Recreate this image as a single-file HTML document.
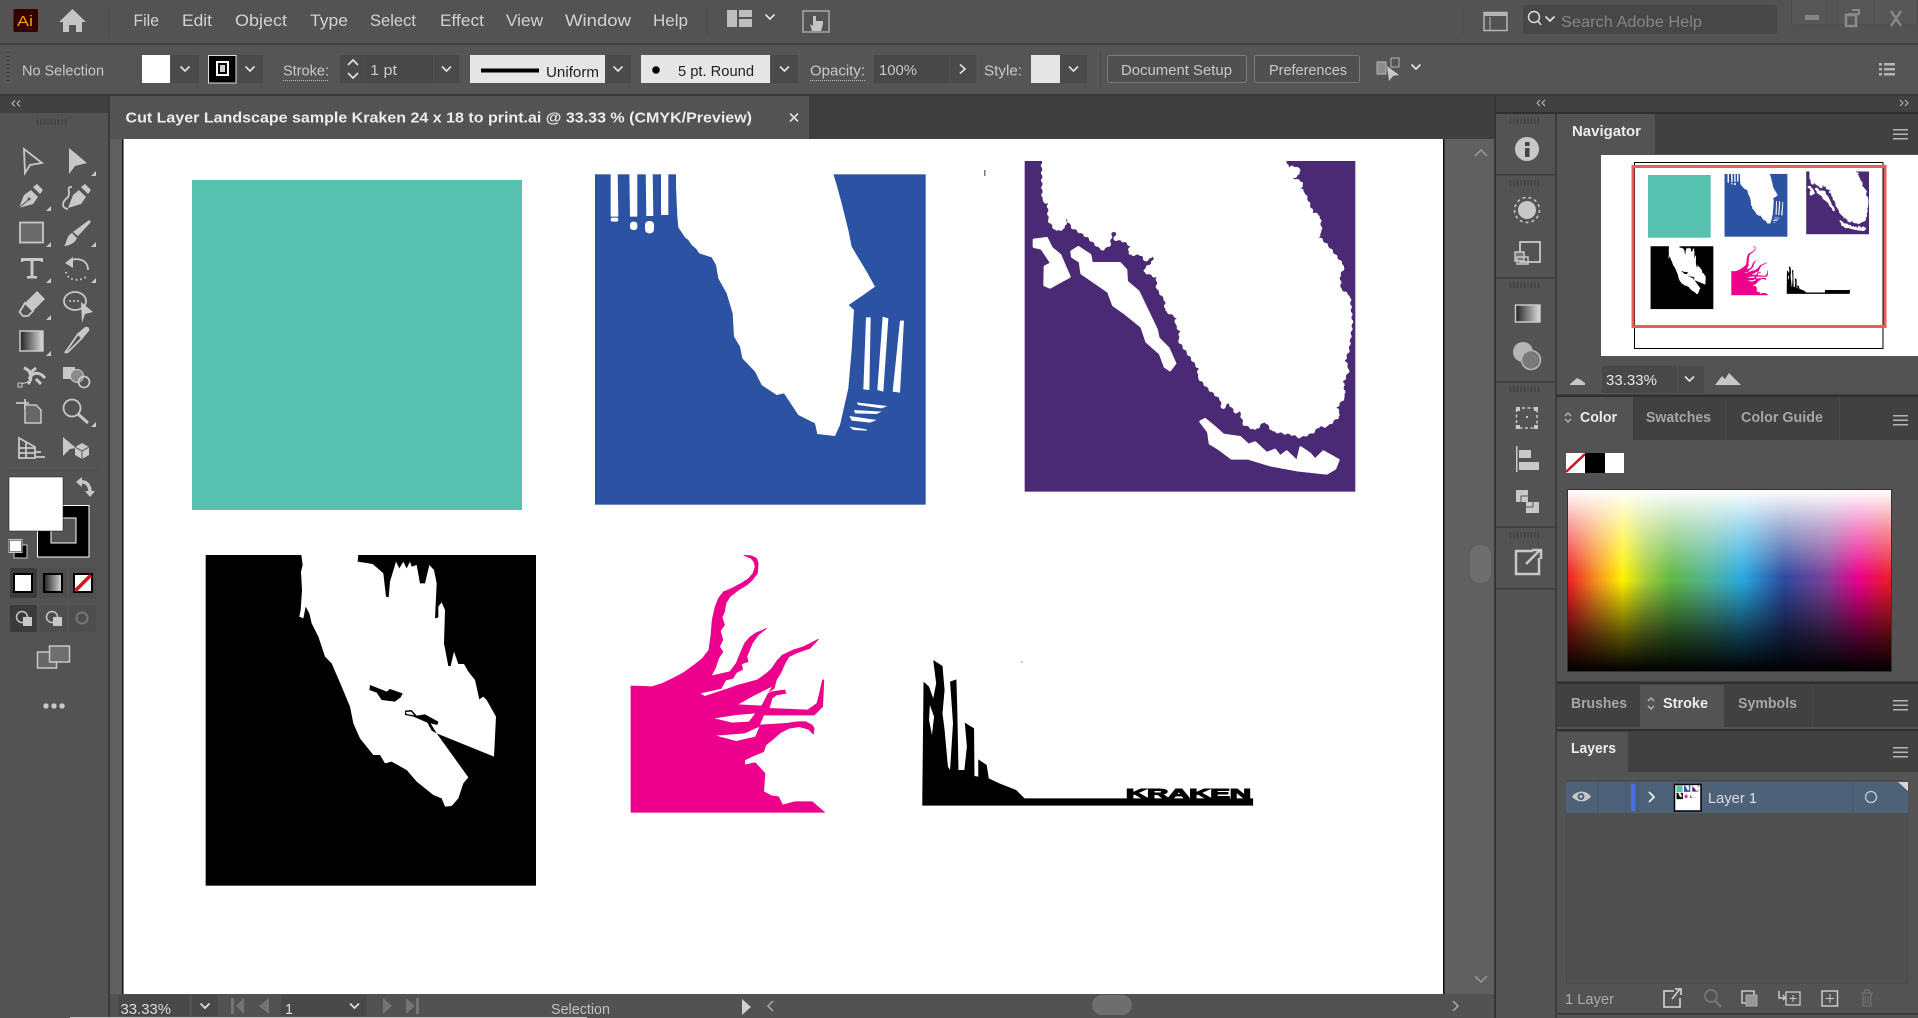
<!DOCTYPE html>
<html><head><meta charset="utf-8"><title>Adobe Illustrator</title>
<style>
html,body{margin:0;padding:0;background:#535353;width:1918px;height:1018px;overflow:hidden}
svg{display:block;position:absolute;left:0;top:0}
text{font-family:"Liberation Sans",sans-serif;white-space:pre}
.m{font-size:16.5px;fill:#d2d2d2}
.c{font-size:14.5px;fill:#c9c9c9}
.d{font-size:14.5px;fill:#222}
.b{font-size:14.5px;font-weight:bold;fill:#ececec}
.i{font-size:14.5px;font-weight:bold;fill:#a6a6a6}
.ic{fill:#c8c8c8}
.st{fill:none;stroke:#c8c8c8;stroke-width:1.8}
.ch{fill:none;stroke:#e0e0e0;stroke-width:1.7}
</style></head><body>
<svg width="1918" height="1018" viewBox="0 0 1918 1018" xmlns="http://www.w3.org/2000/svg">
<defs>
<path id="chev" class="ch" d="M-4.5 -2.5L0 2L4.500 -2.500"/>
<g id="mn"><rect x="0" y="0" width="15" height="1.5" fill="#b5b5b5"/><rect x="0" y="4.500" width="15" height="1.500" fill="#b5b5b5"/><rect x="0" y="9" width="15" height="1.500" fill="#b5b5b5"/></g>
<line id="grip" x1="0" x2="29" y1="0" y2="0" stroke="#333" stroke-width="6" stroke-dasharray="1 2.500" opacity=".75"/>
<path id="tri" d="M-5 0H0V-5Z" fill="#c8c8c8"/>
<linearGradient id="gr" x1="0" x2="1"><stop offset="0" stop-color="#222"/><stop offset="1" stop-color="#ddd"/></linearGradient>
<linearGradient id="hue" x1="0" x2="1">
<stop offset="0" stop-color="#ed1c24"/><stop offset=".09" stop-color="#f7941d"/><stop offset=".17" stop-color="#fff200"/><stop offset=".24" stop-color="#a6ce39"/><stop offset=".32" stop-color="#5fb946"/><stop offset=".44" stop-color="#4fb39a"/><stop offset=".54" stop-color="#27aae1"/><stop offset=".67" stop-color="#2e4a9e"/><stop offset=".8" stop-color="#7f3f98"/><stop offset=".9" stop-color="#ec008c"/><stop offset="1" stop-color="#ed1c24"/></linearGradient>
<linearGradient id="wh" x1="0" x2="0" y1="0" y2="1"><stop offset="0" stop-color="#fff"/><stop offset=".2" stop-color="#fff" stop-opacity=".55"/><stop offset=".48" stop-color="#fff" stop-opacity="0"/></linearGradient>
<linearGradient id="bk" x1="0" x2="0" y1="0" y2="1"><stop offset=".5" stop-color="#000" stop-opacity="0"/><stop offset=".8" stop-color="#000" stop-opacity=".65"/><stop offset="1" stop-color="#000"/></linearGradient>
<polygon id="pm" points="100,25 102,150 118,158 120,210 140,238 160,232 168,195 190,230 235,258 275,295 295,285 302,240 325,245 318,265 345,270 365,285 360,310 395,310 410,330 425,310 438,320 430,340 405,362 445,380 445,415 470,450 470,480 505,500 500,520 515,545 510,570 570,655 568,680 600,715 635,745 640,770 655,750 680,785 692,775 705,820 735,835 765,805 790,840 850,850 870,858 905,845 925,825 950,825 985,795 975,770 1000,740 995,695 1012,660 1000,630 1012,600 1022,520 1015,440 988,420 985,375 998,350 950,290 920,260 930,245 925,200 905,190 880,130 865,115 875,100 838,85 865,70 862,55 830,55 823,25"/>
<g id="art">
<rect x="192" y="180" width="330" height="330" fill="#56c1ae"/>
<g transform="translate(580,150) scale(.33333)">
<rect x="45" y="73" width="992" height="991" fill="#2b52a3"/>
<g fill="#fff">
<polygon points="288,65 288,110 292,200 295,232 315,262 325,270 335,285 348,296 358,310 395,322 408,345 415,385 440,430 458,490 462,560 480,590 487,625 525,665 545,705 590,735 612,730 655,795 705,820 712,852 765,858 780,825 805,715 815,600 822,480 806,465 850,435 885,410 860,365 815,290 805,240 785,160 770,105 758,65"/>
<polygon points="92,65 113,65 115,200 92,200"/><rect x="92" y="203" width="23" height="12" rx="6"/>
<polygon points="148,65 172,65 172,200 150,200"/><rect x="150" y="215" width="22" height="25" rx="9"/>
<polygon points="197,65 218,65 220,198 199,198"/><rect x="195" y="213" width="27" height="37" rx="12"/>
<polygon points="243,65 265,65 265,195 243,195"/>
<polygon points="858,502 872,502 868,720 850,718"/><polygon points="908,500 925,505 910,725 892,720"/><polygon points="960,512 972,512 960,728 938,725"/>
<polygon points="830,757 922,768 905,775 835,765"/><polygon points="822,780 905,785 890,792 825,790"/><polygon points="808,798 890,810 870,818 815,812"/><polygon points="808,830 860,838 860,842 820,840"/>
</g></g>
<g transform="translate(1010,150) scale(.33333)">
<rect x="44" y="33" width="992" height="992" fill="#4b2a75"/>
<g fill="#fff" stroke="#fff" stroke-width="8" stroke-linejoin="round">
<use href="#pm"/>
<polygon points="72,270 110,265 125,295 150,315 178,380 150,395 120,412 104,405 105,350 125,340 95,295 72,290"/>
<polygon points="185,305 205,292 240,315 245,340 330,340 348,360 350,395 385,425 440,540 445,565 475,595 495,640 480,660 465,650 450,610 410,575 395,530 345,490 310,465 295,425 215,370 210,335 187,320"/>
<polygon points="572,815 585,808 612,830 640,855 690,862 715,885 735,878 770,910 795,900 810,920 830,905 862,935 872,893 900,912 915,930 940,905 985,930 975,955 950,970 860,960 780,945 715,925 665,925 625,895 600,880 595,845"/>
</g>
<use href="#pm" fill="none" stroke="#fff" stroke-width="16" stroke-linecap="round" stroke-dasharray="0 22"/>
<rect x="40" y="20" width="1000" height="13" fill="#fff"/>
</g>
<g transform="translate(190,540) scale(.33333)">
<rect x="47" y="45" width="991" height="992" fill="#000"/>
<polygon fill="#fff" points="333,38 338,75 333,95 336,150 332,210 328,230 340,235 347,200 358,220 365,250 385,290 405,350 425,370 455,440 480,500 490,550 510,595 550,645 570,645 585,670 605,665 650,690 680,725 730,765 755,775 765,800 785,798 805,775 820,730 835,712 740,580 912,650 918,530 890,480 880,470 868,478 855,420 835,395 822,372 805,372 792,335 782,378 775,378 762,310 765,210 755,187 745,200 745,232 735,235 740,130 732,90 718,75 705,130 690,130 680,75 665,80 660,65 650,85 640,65 628,85 618,65 600,125 596,172 588,170 580,100 548,72 503,65 505,38"/>
<polygon fill="#000" points="540,435 590,455 600,447 638,460 632,472 615,485 575,480 560,458 538,450"/>
<polygon fill="#000" points="645,512 665,510 680,527 705,523 745,545 742,555 722,550 740,580 725,572 712,548 670,530 645,525"/>
<polygon fill="#fff" points="648,516 664,515 672,526 650,522"/>
</g>
<g transform="translate(610,540) scale(.42087,.33333)">
<polygon fill="#ec008c" stroke="#ec008c" stroke-width="2" stroke-linejoin="round" points="50,438 100,440 125,430 150,415 175,398 200,375 220,355 235,330 240,285 243,240 250,200 258,175 270,155 290,145 312,130 330,115 340,100 345,80 342,65 335,55 318,46 335,47 348,55 352,70 350,100 338,120 325,135 305,150 285,170 275,190 272,215 266,232 272,255 262,272 268,300 260,320 268,335 258,355 250,385 240,408 285,395 300,370 308,345 320,310 332,292 345,280 372,265 352,285 338,310 325,350 328,365 312,372 315,388 300,398 292,415 275,420 262,450 350,420 372,400 385,385 397,362 410,345 435,330 460,320 495,298 475,325 445,338 425,350 415,372 405,400 395,420 390,445 360,470 385,455 415,450 418,460 395,465 385,475 378,505 470,510 492,490 498,460 505,420 508,420 505,500 485,525 420,525 365,525 355,555 420,550 445,545 465,545 480,555 485,565 483,582 472,568 450,560 425,565 405,578 385,600 370,615 365,635 340,648 320,660 320,675 345,668 368,700 365,755 385,768 400,770 410,795 440,785 480,785 510,817 50,817"/>
<g fill="#fff">
<polygon points="215,460 262,447 300,437 225,468"/>
<polygon points="305,493 345,465 385,440 375,460 360,497"/>
<polygon points="248,535 300,525 345,520 330,545 290,548"/>
<polygon points="252,587 320,580 355,560 345,590 300,603"/>
</g></g>
<g transform="translate(610,540) scale(.42087,.33333)">
<polygon fill="#000" points="742,797 742,775 745,425 758,440 768,475 775,430 768,360 790,378 795,450 790,520 795,570 800,640 803,680 808,690 810,650 815,550 808,425 823,418 825,500 828,690 842,690 848,620 843,548 865,565 866,708 875,710 875,658 895,675 900,715 925,730 965,750 985,775 1528,775 1528,797"/>
<polygon fill="#fff" points="760,495 770,530 765,585 758,540"/>
</g>
</g>
</defs>

<!-- base -->
<rect width="1918" height="1018" fill="#535353"/>
<rect y="0" width="1918" height="43" fill="#535353"/>
<rect y="43" width="1918" height="2" fill="#404040"/>
<rect y="45" width="1918" height="49" fill="#555"/>
<rect y="94" width="1918" height="2" fill="#383838"/>

<!-- canvas area -->
<rect x="110" y="96" width="1386" height="922" fill="#606060"/>
<rect x="110" y="96" width="1386" height="43" fill="#3f3f3f"/>
<rect x="110" y="96" width="699" height="43" fill="#535353"/>
<rect x="122" y="139" width="1322" height="855" fill="#fff"/>
<rect x="122" y="139" width="1.500" height="855" fill="#111"/>
<rect x="1443" y="139" width="1.500" height="855" fill="#111"/>
<use href="#art"/>
<text x="1126" y="798" font-size="12.500" font-weight="bold" fill="#000" stroke="#000" stroke-width="1" textLength="125" lengthAdjust="spacingAndGlyphs">KRAKEN</text>
<rect x="984" y="170" width="1.500" height="6" fill="#777"/>
<rect x="1021" y="661" width="1.500" height="2" fill="#bbb"/>

<!-- left toolbar -->
<rect x="0" y="96" width="108" height="922" fill="#535353"/>
<rect x="108" y="96" width="2" height="922" fill="#3a3a3a"/>
<rect x="0" y="96" width="108" height="17" fill="#414141"/>
<path d="M15 100.500L12 103.500L15 106.500M20 100.500L17 103.500L20 106.500" fill="none" stroke="#bbb" stroke-width="1"/>
<use href="#grip" x="37" y="122"/>
<path d="M24 149L42 163L30 165L25 173Z" class="st"/>
<path d="M69 148L87 163L75 166L69 174Z" class="ic"/><use href="#tri" x="96" y="176"/>
<!-- pen -->
<path d="M19 208L24 195L31 190L38 197L33 204Z" class="ic"/><path d="M33 187L37 184L43 190L40 194Z" class="ic"/><circle cx="29" cy="199" r="1.500" fill="#535353"/><path d="M19 208L28 200" stroke="#535353" fill="none"/><use href="#tri" x="51" y="211"/>
<path d="M68 208L73 195L79 190L86 197L81 204Z" class="ic"/><path d="M81 187L85 184L91 190L88 194Z" class="ic"/><path d="M72 187C65 186 72 194 67 198C62 202 61 208 68 209" class="st"/>
<!-- rect, brush -->
<rect x="20" y="222.500" width="23" height="20" fill="#6a6a6a" stroke="#c8c8c8" stroke-width="1.800"/><use href="#tri" x="51" y="247"/>
<path d="M89 220L91 222L78 236L73 232Z" class="ic"/><path d="M72 233L77 238C75 243 69 246 64 246C67 243 66 236 72 233Z" class="ic"/><use href="#tri" x="96" y="247"/>
<!-- type, rotate -->
<path d="M21 258H43V262H41.500L40 261H33.500V276H37V278.500H27V276H30.500V261H24L22.500 262H21Z" class="ic"/><use href="#tri" x="51" y="283"/>
<path d="M68 262C74 257 88 258 88 270" class="st"/><path d="M65 263L73 257V268Z" class="ic"/><path d="M66 272C67 280 78 282 86 277" fill="none" stroke="#c8c8c8" stroke-width="2" stroke-dasharray="1.500 3"/><use href="#tri" x="96" y="283"/>
<!-- eraser, shaper -->
<path d="M37 291L45 299L33 311L25 303Z" class="ic"/><path d="M25 303L33 311L28 316H23L19.500 312Z" class="st"/><use href="#tri" x="51" y="320"/>
<ellipse cx="75" cy="301" rx="11" ry="9" class="st"/><circle cx="70" cy="301" r="1" class="ic"/><circle cx="74" cy="301" r="1" class="ic"/><circle cx="78" cy="301" r="1" class="ic"/><path d="M81 302L93 312L85 314L82 323Z" class="ic"/>
<!-- gradient, eyedropper -->
<rect x="20" y="331" width="23" height="20" fill="url(#gr)" stroke="#c8c8c8" stroke-width="1.500"/><use href="#tri" x="51" y="356"/>
<path d="M67 350C64 353 65 353 68 352L82 338L78 334Z" class="st" /><path d="M78 333L85 327C88 326 90 328 89 331L83 338Z" class="ic"/>
<!-- puppet, shape builder -->
<path d="M24 368C31 370 33 378 28 384M29 379C33 371 40 372 45 378M30 373L36 368M36 379L41 384" fill="none" stroke="#c8c8c8" stroke-width="3"/><rect x="18" y="383" width="4" height="4" fill="none" stroke="#c8c8c8"/><path d="M21 384L28 382" stroke="#c8c8c8"/>
<rect x="63" y="367" width="12" height="12" class="ic"/><circle cx="77" cy="376" r="6.500" fill="#8a8a8a" stroke="#c8c8c8"/><circle cx="84" cy="382" r="5.500" class="st"/>
<!-- artboard, zoom -->
<path d="M16 403H29M25 399V409" class="st"/><path d="M25 405H36L41 410V423H25Z" fill="#666" stroke="#c8c8c8" stroke-width="1.500"/>
<circle cx="72" cy="408" r="8.500" fill="none" stroke="#c8c8c8" stroke-width="1.800"/><path d="M78 414L88 423" stroke="#c8c8c8" stroke-width="3"/><use href="#tri" x="96" y="427"/>
<!-- perspective, 3d -->
<path d="M19 438L35 447V458H19ZM19 448H35M26 441V458M19 453H35" class="st" stroke-width="1.300"/><path d="M34 452H41M36 457H45" class="st" stroke-width="1.300"/>
<path d="M63 437L76 448L70 449L63 456Z" class="ic"/><path d="M82 443L89 447V455L82 459L75 455V447Z" class="ic"/><path d="M75 447L82 451L89 447M82 451V459" stroke="#535353" fill="none"/>
<rect x="8" y="470" width="90" height="1" fill="#4b4b4b"/>

<!-- fill/stroke -->
<rect x="37.500" y="505.500" width="51.500" height="51.500" fill="#000" stroke="#fff"/>
<rect x="51" y="518" width="25" height="25" fill="#535353" stroke="#fff"/>
<rect x="9" y="477" width="54" height="54" fill="#fff" stroke="#111" stroke-width=".5"/>
<path d="M80 482C87 481 90 486 90 492" fill="none" stroke="#c8c8c8" stroke-width="3.500"/><path d="M82 477V487L76 482ZM85 491H95L90 497Z" class="ic"/>
<rect x="14" y="545" width="13" height="13" fill="#000" stroke="#c8c8c8"/><rect x="9.500" y="540" width="12" height="12" fill="#fff" stroke="#111"/><rect x="9" y="539.500" width="13" height="13" fill="none" stroke="#c8c8c8"/>
<rect x="10" y="568" width="27" height="30" rx="2" fill="#3b3b3b"/><rect x="39" y="568" width="28" height="30" fill="#4e4e4e"/><rect x="69" y="568" width="27" height="30" fill="#4e4e4e"/>
<rect x="14" y="574" width="18" height="18" fill="#fff" stroke="#000" stroke-width="2"/>
<rect x="44" y="574" width="18" height="18" fill="url(#gr)" stroke="#000" stroke-width="2"/>
<rect x="74" y="574" width="18" height="18" fill="#fff" stroke="#000" stroke-width="2"/><path d="M75 591L91 575" stroke="#d8141e" stroke-width="3.500"/>
<rect x="10" y="605" width="27" height="27" rx="2" fill="#3b3b3b"/><rect x="39" y="605" width="28" height="27" fill="#4e4e4e"/><rect x="69" y="605" width="27" height="27" fill="#4e4e4e"/>
<circle cx="22" cy="617" r="5.500" fill="none" stroke="#c8c8c8" stroke-width="1.500"/><rect x="23" y="617" width="9" height="9" class="ic"/>
<circle cx="52" cy="617" r="5.500" fill="none" stroke="#c8c8c8" stroke-width="1.500"/><rect x="53" y="617" width="9" height="9" class="ic"/>
<circle cx="82" cy="618" r="5.500" fill="none" stroke="#747474" stroke-width="2"/>
<rect x="37.500" y="652" width="19" height="16" fill="#666" stroke="#c8c8c8" stroke-width="1.500"/><rect x="49.500" y="646" width="20" height="16" fill="#6f6f6f" stroke="#c8c8c8" stroke-width="1.500"/>
<circle cx="46" cy="706" r="2.700" class="ic"/><circle cx="54" cy="706" r="2.700" class="ic"/><circle cx="62" cy="706" r="2.700" class="ic"/>

<!-- title bar -->
<rect x="13.500" y="9" width="24.500" height="23" rx="2" fill="#330000"/>
<text x="17" y="26" font-size="15" fill="#ff9a00" textLength="16" lengthAdjust="spacingAndGlyphs">Ai</text>
<path d="M72.500 9L86 22H82V32H76V25H69V32H63V22H59Z" fill="#c4c4c4"/>
<rect x="108.500" y="7" width="1" height="28" fill="#4a4a4a"/>
<text class="m" x="133.500" y="26" textLength="25.500" lengthAdjust="spacingAndGlyphs">File</text>
<text class="m" x="182" y="26" textLength="30" lengthAdjust="spacingAndGlyphs">Edit</text>
<text class="m" x="235" y="26" textLength="52" lengthAdjust="spacingAndGlyphs">Object</text>
<text class="m" x="310" y="26" textLength="38" lengthAdjust="spacingAndGlyphs">Type</text>
<text class="m" x="370" y="26" textLength="46" lengthAdjust="spacingAndGlyphs">Select</text>
<text class="m" x="440" y="26" textLength="44" lengthAdjust="spacingAndGlyphs">Effect</text>
<text class="m" x="506" y="26" textLength="37" lengthAdjust="spacingAndGlyphs">View</text>
<text class="m" x="565" y="26" textLength="66" lengthAdjust="spacingAndGlyphs">Window</text>
<text class="m" x="653" y="26" textLength="35" lengthAdjust="spacingAndGlyphs">Help</text>
<rect x="707" y="7" width="1" height="28" fill="#4a4a4a"/>
<path d="M727 10H737V27H727ZM739 10H752V17H739ZM739 19H752V27H739Z" fill="#bdbdbd"/>
<use href="#chev" x="770" y="17"/>
<rect x="803" y="11" width="26" height="21" fill="none" stroke="#a8a8a8" stroke-width="1.500"/>
<path d="M813 16V26L810 24L812 31H821L823 24V21H816V16Z" fill="#c4c4c4"/>
<rect x="1462" y="7" width="1" height="28" fill="#4a4a4a"/>
<rect x="1484" y="12.500" width="23" height="18" fill="none" stroke="#b5b5b5" stroke-width="1.500"/><rect x="1484" y="13" width="23" height="3" fill="#b5b5b5"/><path d="M1490 17V30" stroke="#b5b5b5"/>
<rect x="1523" y="5" width="254.500" height="29" rx="3" fill="#474747"/>
<circle cx="1534" cy="17" r="5.500" fill="none" stroke="#ddd" stroke-width="1.500"/><path d="M1538 21L1541 25" stroke="#ddd" stroke-width="1.500"/>
<use href="#chev" x="1550" y="19"/>
<text x="1561" y="27" font-size="15.500" fill="#848484" textLength="141" lengthAdjust="spacingAndGlyphs">Search Adobe Help</text>
<rect x="1791.500" y="-2" width="126" height="27" rx="2" fill="#575757" stroke="#4c4c4c"/>
<path d="M1832 0V24M1874 0V24" stroke="#4c4c4c"/>
<rect x="1805" y="15" width="14" height="5" fill="#868686"/>
<path d="M1848 14H1859V10H1852" fill="none" stroke="#8a8a8a" stroke-width="2"/><rect x="1846" y="15" width="10" height="11" fill="none" stroke="#8a8a8a" stroke-width="2.500"/>
<path d="M1891 11L1901 26M1901 11L1891 26" stroke="#8a8a8a" stroke-width="2.200"/>

<!-- control bar -->
<path d="M8 52V84" stroke="#3a3a3a" stroke-width="3" stroke-dasharray="1 3"/>
<text class="c" x="22" y="75.500" fill="#b8b8b8" textLength="82" lengthAdjust="spacingAndGlyphs">No Selection</text>
<rect x="142" y="55" width="28" height="28" fill="#fff"/><rect x="171" y="55" width="28" height="28" fill="#4a4a4a"/><use href="#chev" x="185" y="69"/>
<rect x="208.500" y="55.500" width="27.500" height="27.500" fill="#000" stroke="#ddd"/><rect x="217" y="62" width="11" height="13" fill="none" stroke="#fff" stroke-width="2"/><rect x="220" y="65" width="5" height="7" fill="#ccc"/>
<rect x="237" y="55" width="26" height="28" fill="#4a4a4a"/><use href="#chev" x="250" y="69"/>
<text class="c" x="283" y="75.500" textLength="46" lengthAdjust="spacingAndGlyphs">Stroke:</text><path d="M283 80.500H329" stroke="#bbb" stroke-dasharray="1 1"/>
<rect x="340" y="55" width="27" height="28" fill="#4a4a4a"/><path d="M348 65L353 60L358 65M348 73L353 78L358 73" class="ch"/>
<rect x="367" y="55" width="66" height="28" fill="#484848"/><text class="c" x="370" y="75" fill="#ddd" textLength="27" lengthAdjust="spacingAndGlyphs">1 pt</text>
<rect x="433.500" y="55" width="26" height="28" fill="#4a4a4a"/><use href="#chev" x="446.500" y="69"/>
<rect x="470" y="55" width="135" height="28" fill="#e6e6e6"/><rect x="481" y="68.500" width="58" height="4" fill="#000"/><text class="d" x="546" y="77" textLength="53" lengthAdjust="spacingAndGlyphs">Uniform</text>
<rect x="605" y="55" width="26" height="28" fill="#4a4a4a"/><use href="#chev" x="618" y="69"/>
<rect x="641" y="55" width="129" height="28" fill="#e6e6e6"/><circle cx="656" cy="70" r="3.800" fill="#000"/><text class="d" x="678" y="76" textLength="76" lengthAdjust="spacingAndGlyphs">5 pt. Round</text>
<rect x="771" y="55" width="27" height="28" fill="#4a4a4a"/><use href="#chev" x="784.500" y="69"/>
<text class="c" x="810" y="75.500" textLength="55" lengthAdjust="spacingAndGlyphs">Opacity:</text><path d="M810 80.500H865" stroke="#bbb" stroke-dasharray="1 1"/>
<rect x="874" y="55" width="75" height="28" fill="#484848"/><text class="c" x="879" y="75" fill="#ddd" textLength="38" lengthAdjust="spacingAndGlyphs">100%</text>
<rect x="949.500" y="55" width="27" height="28" fill="#4a4a4a"/><path d="M960 64.500L965 69L960 73.500" class="ch"/>
<text class="c" x="984" y="75.500" fill="#aaa" textLength="38" lengthAdjust="spacingAndGlyphs">Style:</text>
<rect x="1031" y="55" width="29" height="28" fill="#e6e6e6"/><rect x="1060" y="55" width="27" height="28" fill="#4a4a4a"/><use href="#chev" x="1073.500" y="69"/>
<rect x="1100" y="50" width="1" height="38" fill="#4b4b4b"/>
<rect x="1107.500" y="55.500" width="139" height="27" rx="2" fill="#505050" stroke="#7a7a7a"/><text class="c" x="1121" y="75" fill="#eaeaea" textLength="111" lengthAdjust="spacingAndGlyphs">Document Setup</text>
<rect x="1254.500" y="55.500" width="105" height="27" rx="2" fill="#505050" stroke="#7a7a7a"/><text class="c" x="1269" y="75" fill="#eaeaea" textLength="78" lengthAdjust="spacingAndGlyphs">Preferences</text>
<rect x="1377" y="62" width="9" height="12" fill="#8a8a8a" stroke="#b5b5b5"/><rect x="1391" y="58" width="8" height="9" fill="none" stroke="#b5b5b5"/><path d="M1387 66L1399 75L1393 76L1389 81Z" class="ic"/>
<use href="#chev" x="1416" y="67"/>
<g fill="#b5b5b5"><rect x="1879" y="63" width="3" height="2.500"/><rect x="1884" y="63" width="11" height="2.500"/><rect x="1879" y="68" width="3" height="2.500"/><rect x="1884" y="68" width="11" height="2.500"/><rect x="1879" y="73" width="3" height="2.500"/><rect x="1884" y="73" width="11" height="2.500"/></g>

<!-- doc tab -->
<text x="125.500" y="122.500" font-size="15" font-weight="bold" fill="#ececec" textLength="626.500" lengthAdjust="spacingAndGlyphs">Cut Layer Landscape sample Kraken 24 x 18 to print.ai @ 33.33 % (CMYK/Preview)</text>
<path d="M790 113.500L798 121.500M798 113.500L790 121.500" stroke="#ddd" stroke-width="1.600"/>

<!-- scrollbar -->
<path d="M1475 156L1481 150L1487 156" fill="none" stroke="#999" stroke-width="1.500"/>
<path d="M1475 976L1481 982L1487 976" fill="none" stroke="#999" stroke-width="1.500"/>
<rect x="1470" y="545" width="21" height="38" rx="10" fill="#6e6e6e"/>

<!-- status bar -->
<rect x="110" y="994" width="1386" height="24" fill="#525252"/>
<rect x="118" y="995" width="71" height="21" fill="#484848"/><text x="120.500" y="1014" font-size="14.500" fill="#ddd" textLength="50.500" lengthAdjust="spacingAndGlyphs">33.33%</text>
<rect x="192" y="995" width="26" height="21" fill="#484848"/><use href="#chev" x="205" y="1006"/>
<path d="M231 998H234V1014H231ZM244 998V1014L236 1006Z" fill="#747474"/><path d="M269 998V1014L259 1006Z" fill="#747474"/>
<rect x="281" y="995" width="61" height="21" fill="#484848"/><text x="285" y="1014" font-size="14.500" fill="#ddd">1</text>
<rect x="342" y="995" width="25" height="21" fill="#484848"/><use href="#chev" x="354.500" y="1006"/>
<path d="M383 998V1014L392 1006Z" fill="#747474"/><path d="M406 998V1014L415 1006ZM416 998H419V1014H416Z" fill="#747474"/>
<text x="551" y="1014" font-size="14.500" fill="#c0c0c0" textLength="59" lengthAdjust="spacingAndGlyphs">Selection</text>
<path d="M742 999V1015L751 1007Z" fill="#d0d0d0"/>
<path d="M773 1001L768 1006L773 1011" fill="none" stroke="#aaa" stroke-width="1.500"/>
<rect x="1092" y="995" width="40" height="20" rx="10" fill="#6e6e6e"/>
<path d="M1453 1001L1458 1006L1453 1011" fill="none" stroke="#aaa" stroke-width="1.500"/>
<rect x="70" y="1017" width="517" height="1" fill="#ccc"/>

<!-- right dock -->
<rect x="1495" y="96" width="423" height="922" fill="#535353"/>
<rect x="1494" y="96" width="2" height="922" fill="#353535"/>
<rect x="1496" y="96" width="422" height="16" fill="#414141"/>
<rect x="1496" y="112" width="422" height="2" fill="#2f2f2f"/>
<path d="M1540 100L1537 103L1540 106M1545 100L1542 103L1545 106" fill="none" stroke="#bbb" stroke-width="1"/>
<path d="M1900 100L1903 103L1900 106M1905 100L1908 103L1905 106" fill="none" stroke="#bbb" stroke-width="1"/>
<rect x="1555" y="114" width="2" height="904" fill="#3d3d3d"/>
<!-- strip -->
<g fill="#3e3e3e"><rect x="1496" y="174" width="59" height="1.500"/><rect x="1496" y="277" width="59" height="1.500"/><rect x="1496" y="381" width="59" height="1.500"/><rect x="1496" y="526.500" width="59" height="1.500"/><rect x="1496" y="588" width="59" height="1.500"/></g>
<use href="#grip" x="1510" y="121"/><use href="#grip" x="1510" y="183"/><use href="#grip" x="1510" y="285"/><use href="#grip" x="1510" y="389"/><use href="#grip" x="1510" y="535"/>
<circle cx="1527" cy="149" r="12" class="ic"/><rect x="1525" y="148" width="4.500" height="9" fill="#444"/><rect x="1525" y="142" width="4.500" height="4" fill="#444"/>
<circle cx="1527" cy="210" r="9" class="ic"/><circle cx="1527" cy="210" r="12.500" fill="none" stroke="#c8c8c8" stroke-width="1.500" stroke-dasharray="3 3"/>
<rect x="1520" y="242" width="20" height="20" class="st"/><rect x="1515" y="252" width="9" height="9" fill="#777" stroke="#c8c8c8" stroke-width="1.500"/><rect x="1517" y="257" width="11" height="7" fill="none" stroke="#c8c8c8" stroke-width="1.500"/>
<rect x="1515.500" y="305" width="24.500" height="17" fill="url(#gr)" stroke="#c8c8c8" stroke-width="1.500"/>
<circle cx="1523" cy="352" r="10" fill="#b5b5b5"/><circle cx="1531" cy="360" r="9.500" fill="#7a7a7a" stroke="#b5b5b5" stroke-width="1.500"/>
<path d="M1516.500 408H1537V428H1516.500Z" fill="none" stroke="#c8c8c8" stroke-width="1.500" stroke-dasharray="3 2.500"/>
<g class="ic"><rect x="1516" y="407" width="4" height="4"/><rect x="1534" y="407" width="4" height="4"/><rect x="1516" y="425" width="4" height="4"/><rect x="1534" y="425" width="4" height="4"/><rect x="1526" y="416" width="2" height="2"/></g>
<rect x="1516" y="446" width="1.500" height="26" class="ic"/><rect x="1519" y="450" width="12" height="8" class="ic"/><rect x="1519" y="462" width="20" height="8" class="ic"/>
<rect x="1516" y="490" width="12" height="12" class="ic"/><rect x="1526" y="502" width="13" height="11" class="ic"/><rect x="1521" y="496" width="12" height="11" fill="none" stroke="#555"/>
<path d="M1533 551H1516V574H1539V558M1526 564L1540 550M1532 550H1541V559" fill="none" stroke="#c8c8c8" stroke-width="2.500"/>

<!-- navigator -->
<rect x="1557" y="114" width="361" height="40" fill="#414141"/>
<rect x="1557" y="114" width="98" height="40" fill="#535353"/>
<text class="b" x="1572" y="136" textLength="69" lengthAdjust="spacingAndGlyphs">Navigator</text>
<use href="#mn" x="1893" y="129"/>
<rect x="1601" y="155" width="317" height="201" fill="#fff"/>
<rect x="1634.500" y="162.500" width="248.500" height="186" fill="#fff" stroke="#000"/>
<g transform="translate(1611.500,140.800) scale(.19)"><use href="#art"/></g>
<rect x="1825" y="290" width="25" height="2.500" fill="#000"/>
<rect x="1633" y="166.500" width="252" height="160" fill="none" stroke="#ec5b5b" stroke-width="3"/>
<path d="M1570 384L1577 378L1581 380L1585 383V385H1570Z" class="ic"/>
<rect x="1602" y="366" width="75" height="27" rx="2" fill="#484848"/><text x="1606" y="385" font-size="15" fill="#e6e6e6" textLength="51" lengthAdjust="spacingAndGlyphs">33.33%</text>
<rect x="1678" y="366" width="26" height="27" fill="#4a4a4a"/><use href="#chev" x="1689.500" y="379"/>
<path d="M1715 385L1722 376L1725 379L1729 373L1741 385Z" class="ic"/>
<rect x="1557" y="394.500" width="361" height="2.500" fill="#2f2f2f"/>

<!-- color -->
<rect x="1557" y="397" width="361" height="43" fill="#414141"/>
<rect x="1557" y="397" width="76" height="43" fill="#535353"/>
<path d="M1565 416L1568 413L1571 416M1565 419L1568 422L1571 419" fill="none" stroke="#bbb" stroke-width="1.300"/>
<text class="b" x="1580" y="422" textLength="37" lengthAdjust="spacingAndGlyphs">Color</text>
<text class="i" x="1646" y="422" textLength="65" lengthAdjust="spacingAndGlyphs">Swatches</text>
<text class="i" x="1741" y="422" textLength="82" lengthAdjust="spacingAndGlyphs">Color Guide</text>
<rect x="1725" y="397" width="1" height="43" fill="#484848"/><rect x="1839" y="397" width="1" height="43" fill="#484848"/>
<use href="#mn" x="1893" y="415"/>
<rect x="1566" y="453" width="19" height="20" fill="#fff"/><path d="M1566 472L1585 454" stroke="#c8141e" stroke-width="2.500"/>
<rect x="1585" y="453" width="20" height="20" fill="#000"/><rect x="1605" y="453" width="19" height="20" fill="#fff"/>
<rect x="1567" y="489" width="325" height="183" fill="#333"/>
<rect x="1568" y="490" width="323" height="181" fill="url(#hue)"/><rect x="1568" y="490" width="323" height="181" fill="url(#wh)"/><rect x="1568" y="490" width="323" height="181" fill="url(#bk)"/>
<rect x="1557" y="681.500" width="361" height="3" fill="#2f2f2f"/>

<!-- brushes -->
<rect x="1557" y="685" width="361" height="42" fill="#414141"/>
<rect x="1640" y="685" width="84" height="44" fill="#535353"/>
<text class="i" x="1571" y="708" textLength="56" lengthAdjust="spacingAndGlyphs">Brushes</text>
<path d="M1648 701L1651 698L1654 701M1648 706L1651 709L1654 706" fill="none" stroke="#bbb" stroke-width="1.300"/>
<text class="b" x="1663" y="708" textLength="45" lengthAdjust="spacingAndGlyphs">Stroke</text>
<text class="i" x="1738" y="708" textLength="59" lengthAdjust="spacingAndGlyphs">Symbols</text>
<rect x="1812" y="685" width="1" height="42" fill="#484848"/>
<use href="#mn" x="1893" y="700"/>
<rect x="1557" y="729" width="361" height="2.500" fill="#2f2f2f"/>

<!-- layers -->
<rect x="1557" y="732" width="361" height="40" fill="#414141"/>
<rect x="1557" y="732" width="71" height="40" fill="#535353"/>
<text class="b" x="1571" y="753" textLength="45" lengthAdjust="spacingAndGlyphs">Layers</text>
<use href="#mn" x="1893" y="747"/>
<rect x="1566.500" y="780.500" width="341" height="203" fill="#505050" stroke="#4a4a4a"/>
<rect x="1566" y="782" width="342" height="31" fill="#4d6278"/>
<path d="M1598 782V813M1626 782V813M1638 782V813M1853 782V813" stroke="#455869"/>
<path d="M1572 796.500C1577 790 1586 790 1591 796.500C1586 803 1577 803 1572 796.500Z" class="ic"/><circle cx="1581" cy="796.500" r="3.500" fill="#4d6278"/><circle cx="1581" cy="796.500" r="1.500" class="ic"/>
<rect x="1631" y="784" width="4" height="27" fill="#4a6fe0"/>
<path d="M1649 792L1654 797L1649 802" fill="none" stroke="#eee" stroke-width="1.800"/>
<rect x="1674.500" y="784.500" width="26.500" height="26.500" fill="#fff" stroke="#000" stroke-width="1.500"/>
<g transform="translate(1672.700,782.300) scale(.019)"><use href="#art"/></g>
<text x="1708" y="803" font-size="14.500" fill="#dcdcdc" textLength="49" lengthAdjust="spacingAndGlyphs">Layer 1</text>
<circle cx="1871" cy="797" r="5.500" fill="none" stroke="#c8c8c8" stroke-width="1.300"/>
<path d="M1898 782H1908V791Z" fill="#d6d6d6"/>
<text x="1565" y="1004" font-size="14.500" fill="#ababab" textLength="49" lengthAdjust="spacingAndGlyphs">1 Layer</text>
<path d="M1674 991H1664V1007H1680V998M1672 999L1680 989M1675 989H1681V995" fill="none" stroke="#c8c8c8" stroke-width="1.800"/>
<circle cx="1711" cy="996" r="6" fill="none" stroke="#747474" stroke-width="1.800"/><path d="M1715 1001L1721 1007" stroke="#747474" stroke-width="2.500"/>
<rect x="1742" y="991" width="12" height="12" fill="none" stroke="#c8c8c8" stroke-width="1.500"/><rect x="1746" y="995" width="11" height="11" fill="#999" stroke="#aaa"/>
<path d="M1779 991V998H1785M1783 995L1785 998L1783 1000" fill="none" stroke="#c8c8c8" stroke-width="1.500"/><rect x="1786" y="992" width="14" height="13" fill="none" stroke="#c8c8c8" stroke-width="1.300"/><path d="M1793 995V1002M1789.500 998.500H1796.500" stroke="#c8c8c8"/>
<rect x="1822" y="991" width="15.500" height="15" fill="none" stroke="#c8c8c8" stroke-width="1.500"/><path d="M1830 994V1003M1825.500 998.500H1834" stroke="#c8c8c8"/>
<path d="M1861 993H1873M1863 993V1006H1871V993M1865 993V990H1869V993M1865.500 996V1004M1868.500 996V1004" fill="none" stroke="#707070" stroke-width="1.300"/>
<rect x="1557" y="1013" width="361" height="1.500" fill="#333"/>
</svg>
</body></html>
